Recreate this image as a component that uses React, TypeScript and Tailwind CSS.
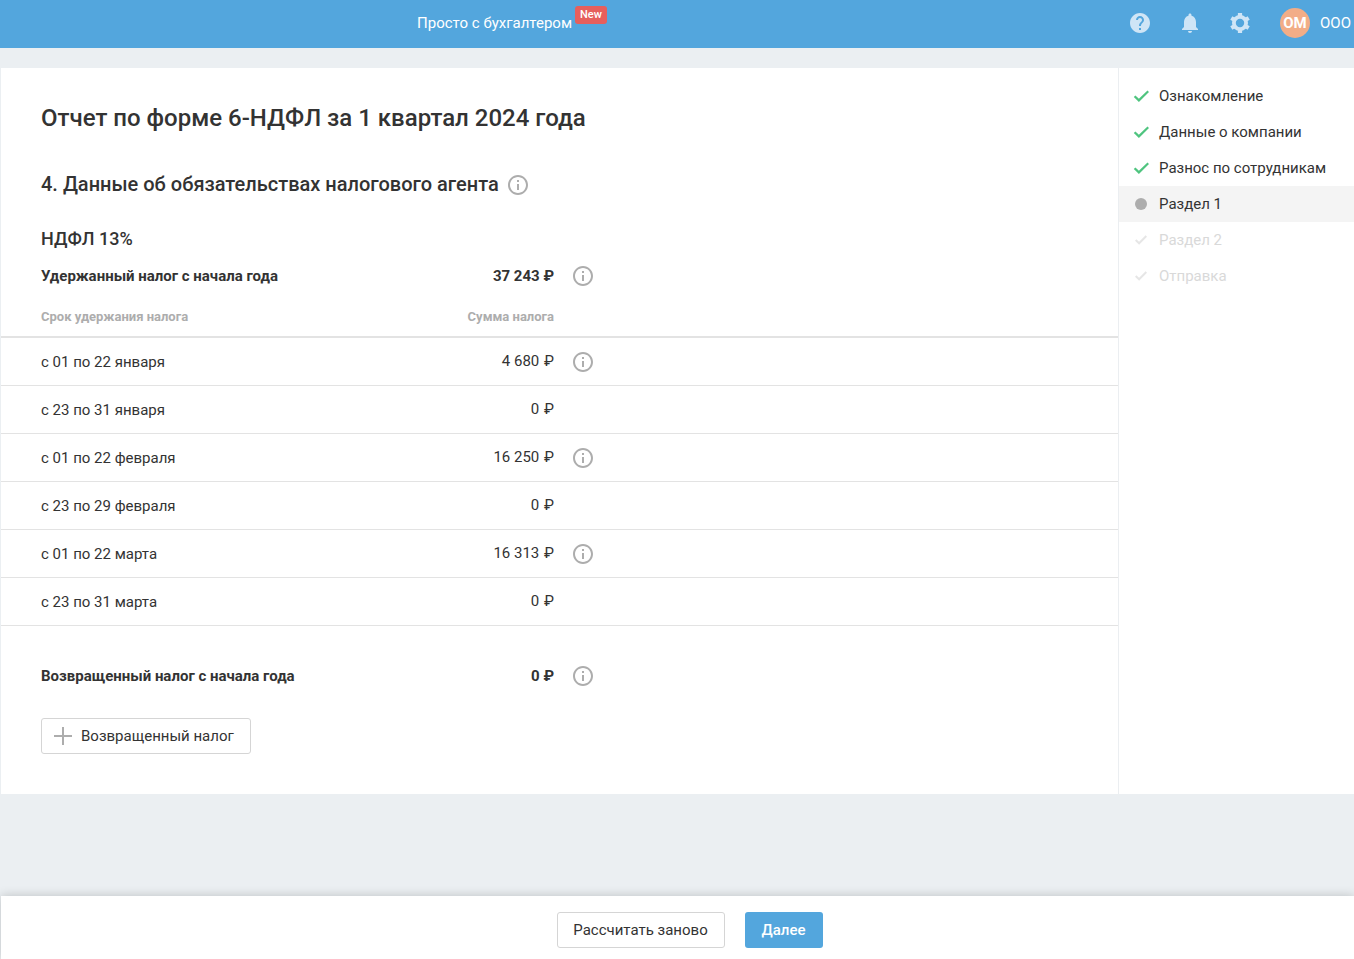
import { MdHelp, MdInfoOutline, MdNotifications } from "react-icons/md";

type Step = {
  name: string;
  state: "done" | "current" | "next";
}

type Period = {
  name: string;
  sum: string;
  info: boolean;
}

const steps: Step[] = [
  { name: "Ознакомление", state: "done" },
  { name: "Данные о компании", state: "done" },
  { name: "Разнос по сотрудникам", state: "done" },
  { name: "Раздел 1", state: "current" },
  { name: "Раздел 2", state: "next" },
  { name: "Отправка", state: "next" },
];

const periods: Period[] = [
  { name: "с 01 по 22 января", sum: "4 680", info: true },
  { name: "с 23 по 31 января", sum: "0", info: false },
  { name: "с 01 по 22 февраля", sum: "16 250", info: true },
  { name: "с 23 по 29 февраля", sum: "0", info: false },
  { name: "с 01 по 22 марта", sum: "16 313", info: true },
  { name: "с 23 по 31 марта", sum: "0", info: false },
];

const InfoButton = () => (
  <button type="button" aria-label="Подсказка" className="block text-[#adadad]">
    <MdInfoOutline size={24} />
  </button>
);

const GearIcon = () => (
  <svg width="20" height="20" viewBox="0 0 20 20" fill="none" stroke="currentColor">
    <circle cx="10" cy="10" r="6.1" strokeWidth="3.8" />
    <path
      d="M10 0v4M10 16v4M1.3 5l3.5 2M15.2 13l3.5 2M1.3 15l3.5-2M15.2 7l3.5-2"
      strokeWidth="4.2"
    />
  </svg>
);

const StepIcon = ({ state }: { state: Step["state"] }) => {
  if (state === "current") {
    return <span className="size-3 rounded-full bg-[#adadad]" />;
  }
  if (state === "done") {
    return (
      <svg width="16" height="12" viewBox="0 0 16 12" fill="none" stroke="#4fc47f" strokeWidth="2.3">
        <path d="M1.6 6.2l4.3 4.2L15.3 1.2" />
      </svg>
    );
  }
  return (
    <svg width="12" height="10" viewBox="0 0 12 10" fill="none" stroke="#e6e6e6" strokeWidth="2">
      <path d="M0.7 5l3.4 3.3L11.3 1" />
    </svg>
  );
};

const Header = () => (
  <header className="flex h-12 items-center bg-[#53a6dd] pb-[2px] text-white">
    <nav className="flex flex-1 justify-center">
      <a href="#" className="flex items-start gap-[3px]">
        <span className="leading-5">Просто с бухгалтером</span>
        <span className="-mt-[7px] h-[18px] rounded-[3px] bg-[#e65f5c] px-[5px] text-[11px] leading-[18px] font-medium">New</span>
      </a>
    </nav>
    <div className="flex w-[330px] items-center justify-end pr-[3px]">
      <div className="mr-7 flex items-center gap-[26px] text-[#cfe5f6]">
        <button type="button" aria-label="Помощь"><MdHelp size={24} /></button>
        <button type="button" aria-label="Уведомления"><MdNotifications size={24} /></button>
        <button type="button" aria-label="Настройки" className="flex size-6 items-center justify-center"><GearIcon /></button>
      </div>
      <button type="button" className="flex items-center gap-[10px]">
        <span className="flex size-[30px] items-center justify-center rounded-full bg-[#f2ad87] font-bold">ОМ</span>
        <span>ООО</span>
      </button>
    </div>
  </header>
);

const TotalRow = ({ label, sum }: { label: string; sum: string }) => (
  <div className="flex h-6 items-center px-10 font-bold">
    <div className="w-[360px]">{label}</div>
    <div className="w-[153px] text-right">{sum}</div>
    <div className="pl-[17px]"><InfoButton /></div>
  </div>
);

const PeriodsTable = () => (
  <table className="w-full table-fixed border-collapse text-left">
    <thead>
      <tr className="border-b-2 border-[#e3e3e3] text-[13px] leading-4 text-[#adadad]">
        <th className="w-[400px] pt-[21px] pb-[11px] pl-10 font-bold">Срок удержания налога</th>
        <th className="w-[153px] pt-[21px] pb-[11px] text-right font-bold">Сумма налога</th>
        <th aria-label="Подсказка" />
      </tr>
    </thead>
    <tbody>
      {periods.map((period) => (
        <tr key={period.name} className="h-12 border-b border-[#e3e3e3]">
          <td className="pt-[2px] pl-10">{period.name}</td>
          <td className="text-right">{period.sum} <span className="ml-px">₽</span></td>
          <td className="pt-[2px] pl-[17px]">{period.info && <InfoButton />}</td>
        </tr>
      ))}
    </tbody>
  </table>
);

const Sidebar = () => (
  <aside className="w-[236px] shrink-0 border-l border-[#ebeef1] pt-[10px]">
    <ol>
      {steps.map((step) => (
        <li
          key={step.name}
          className={
            step.state === "current"
              ? "flex h-9 items-center bg-[#f4f4f4]"
              : step.state === "next"
                ? "flex h-9 items-center text-[#d9d9d9]"
                : "flex h-9 items-center"
          }
        >
          <span className="ml-3 mr-2 flex w-5 justify-center"><StepIcon state={step.state} /></span>
          {step.name}
        </li>
      ))}
    </ol>
  </aside>
);

const App = () => {
  return (
    <div className="flex min-h-screen flex-col bg-[#ebeff2] font-['Roboto',sans-serif] text-[15px] leading-5 text-[#333]">
      <Header />
      <div className="mt-5 mb-5 ml-px flex bg-white">
        <main className="min-w-0 flex-1 pt-8 pb-10">
          <h1 className="px-10 text-2xl leading-9 font-medium">Отчет по форме 6-НДФЛ за 1 квартал 2024 года</h1>
          <div className="mt-[34px] flex items-center gap-[7px] px-10">
            <h2 className="pb-[2px] text-xl leading-7 font-medium">4. Данные об обязательствах налогового агента</h2>
            <InfoButton />
          </div>
          <h3 className="mt-[27px] mb-[13px] px-10 text-lg leading-6 font-medium">НДФЛ 13%</h3>
          <TotalRow label="Удержанный налог с начала года" sum="37 243 ₽" />
          <PeriodsTable />
          <div className="mt-[38px]">
            <TotalRow label="Возвращенный налог с начала года" sum="0 ₽" />
          </div>
          <button type="button" className="mt-[30px] ml-10 flex h-9 items-center gap-2 rounded-[3px] border border-[#d5d5d5] pr-4 pl-[11px]">
            <svg width="20" height="20" viewBox="0 0 20 20" stroke="#adadad" strokeWidth="2">
              <path d="M10 1v18M1 10h18" />
            </svg>
            Возвращенный налог
          </button>
        </main>
        <Sidebar />
      </div>
      <footer className="sticky bottom-0 mt-auto ml-px flex justify-center gap-5 bg-white pt-4 pb-[11px] pl-6 shadow-[0_0_10px_rgba(0,0,0,0.2)]">
        <button type="button" className="h-9 w-[168px] rounded-[3px] border border-[#d5d5d5]">Рассчитать заново</button>
        <button type="button" className="h-9 w-[78px] rounded-[3px] bg-[#53a6dd] font-medium text-white">Далее</button>
      </footer>
    </div>
  );
};

export default App;
